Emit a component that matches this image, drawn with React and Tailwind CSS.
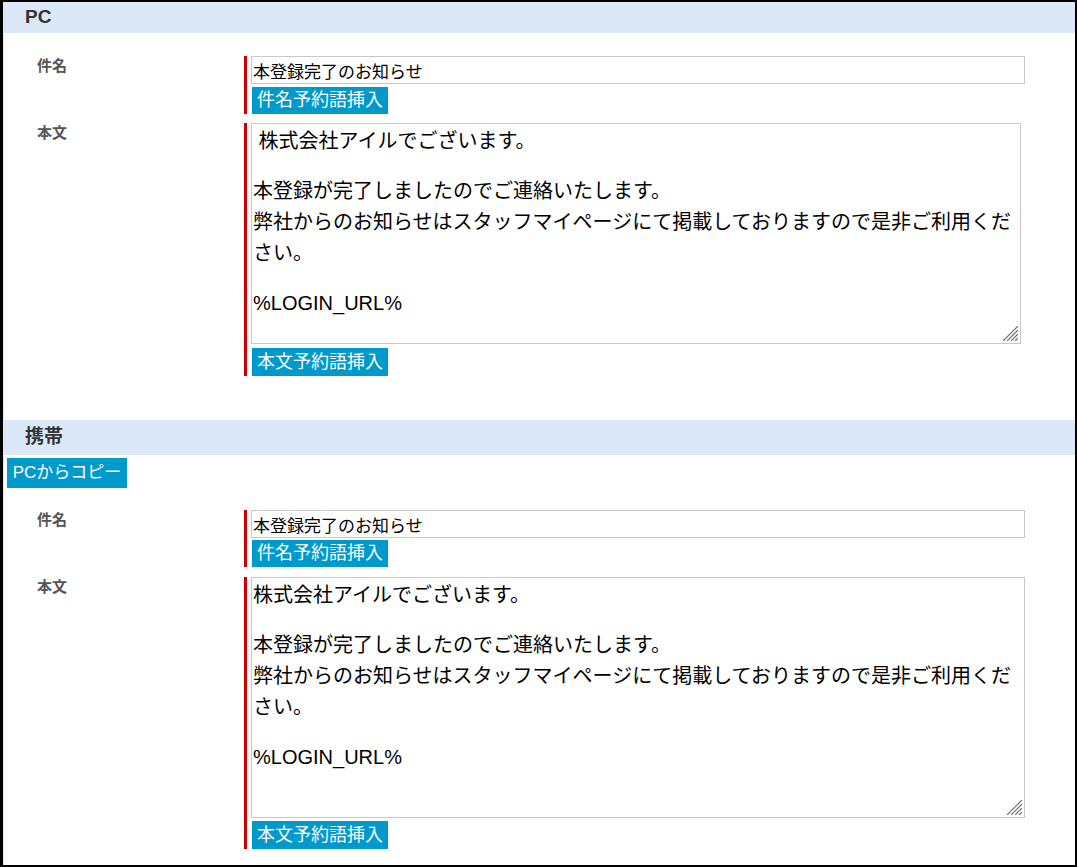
const font = "font-['Liberation_Sans','Noto_Sans_CJK_JP',sans-serif]";

const BlueButton = ({ children, className = "" }) => (
  <button
    className={`bg-[#0099cc] text-white text-[18px] px-[5px] whitespace-nowrap block ${className}`}
  >
    {children}
  </button>
);

const Label = ({ children }) => (
  <div className="w-[240px] shrink-0 pl-[33px] text-[15px] leading-[20px] font-bold text-[#555]">
    {children}
  </div>
);

// resize grip in the textarea corner
const Grip = () => (
  <svg
    width="17"
    height="17"
    viewBox="0 0 17 17"
    className="absolute right-[1px] bottom-[1px]"
  >
    <g stroke="#707070" strokeWidth="1.1" strokeLinecap="round">
      <line x1="15.5" y1="1.5" x2="1.5" y2="15.5" />
      <line x1="15.5" y1="5.5" x2="5.5" y2="15.5" />
      <line x1="15.5" y1="9.5" x2="9.5" y2="15.5" />
      <line x1="15.5" y1="13.5" x2="13.5" y2="15.5" />
    </g>
  </svg>
);

const Body = ({ lines, className }) => (
  <div className={`relative border border-[#c8c8c8] ${className}`}>
    <div className="h-full overflow-hidden pl-px pt-[2px] text-[20px] leading-[31px] text-black whitespace-pre-wrap">
      {lines.map((para, i) => (
        <p key={i} className="mb-[19px]">
          {para.map((l, j) => (
            <span key={j} className="block">
              {l}
            </span>
          ))}
        </p>
      ))}
    </div>
    <Grip />
  </div>
);

const makeLines = (lead) => [
  [lead + "株式会社アイルでございます。"],
  [
    "本登録が完了しましたのでご連絡いたします。",
    "弊社からのお知らせはスタッフマイページにて掲載しておりますので是非ご利用ください。",
  ],
  ["%LOGIN_URL%"],
];

const Fields = ({ subjectGap, rowGap, bodyClass, bodyGap, lead }) => (
  <div>
    {/* 件名 */}
    <div className="flex">
      <Label>件名</Label>
      <div className="border-l-[3px] border-[#cc0000] pl-[4px]">
        <input
          defaultValue="本登録完了のお知らせ"
          className="block w-[774px] h-[28px] border border-[#c8c8c8] pl-px text-[17px] text-black outline-none"
        />
        <BlueButton className={`h-[27px] leading-[27px] ml-px ${subjectGap}`}>
          件名予約語挿入
        </BlueButton>
      </div>
    </div>

    {/* 本文 */}
    <div className={`flex ${rowGap}`}>
      <Label>本文</Label>
      <div className="border-l-[3px] border-[#cc0000] pl-[4px]">
        <Body lines={makeLines(lead)} className={bodyClass} />
        <BlueButton className={`h-[28px] leading-[28px] ml-px ${bodyGap}`}>
          本文予約語挿入
        </BlueButton>
      </div>
    </div>
  </div>
);

export default function App() {
  return (
    <div
      className={`${font} w-[1077px] h-[867px] border-l-[3px] border-t-2 border-r-2 border-b-2 border-black bg-white overflow-hidden`}
    >
      <div className="h-full border-l border-[#d6e6f8]">
        {/* PC */}
        <div className="h-[31px] bg-[#dae8f7] pl-[21px] flex items-center text-[19px] font-bold text-[#333]">
          PC
        </div>
        <div className="pt-[23px]">
          <Fields
            subjectGap="mt-[3px]"
            rowGap="mt-[9px]"
            bodyClass="w-[770px] h-[221px]"
            bodyGap="mt-[4px]"
            lead=" "
          />
        </div>

        {/* 携帯 */}
        <div className="mt-[44px] h-[35px] bg-[#dae8f7] pl-[21px] flex items-center text-[19px] font-bold text-[#333]">
          携帯
        </div>
        <BlueButton className="mt-[3px] ml-[3px] h-[30px] leading-[30px] w-[120px] !text-[17px] !px-0 text-center">
          PCからコピー
        </BlueButton>
        <div className="pt-[22px]">
          <Fields
            subjectGap="mt-[2px]"
            rowGap="mt-[10px]"
            bodyClass="w-[774px] h-[241px]"
            bodyGap="mt-[3px]"
            lead=""
          />
        </div>
      </div>
    </div>
  );
}
